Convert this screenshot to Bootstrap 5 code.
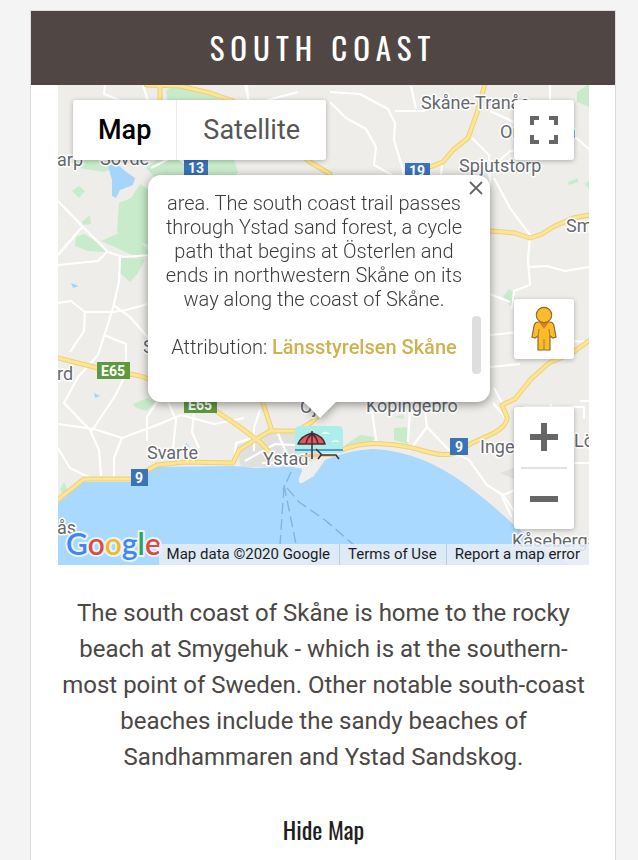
<!DOCTYPE html>
<html lang="en">
<head>
<meta charset="utf-8">
<meta name="viewport" content="width=device-width, initial-scale=1">
<title>South Coast</title>
<link href="https://cdn.jsdelivr.net/npm/bootstrap@5.3.0/dist/css/bootstrap.min.css" rel="stylesheet">
<style>
body { background: #f4f4f4; font-family: Roboto, "Liberation Sans", sans-serif; color: #4b4745; }
.page-shell { padding: 10px 22px 0 30px; }
.region-panel { border: 1px solid #dcdcdc; border-bottom: 0; min-height: calc(100vh - 10px); }
.region-head { background: #504644; height: 74px; }
.region-head h1 { font-family: Oswald, "Liberation Sans Narrow", "Liberation Sans", sans-serif; font-size: 31px; line-height: 72px; letter-spacing: 6px; }
.region-body { padding: 0 26px 0 27px; }
.map-frame { height: 480px; background: #eeede9; }
.map-canvas { width: 100%; height: 100%; }
.over { position: absolute; }
.map-tile { background: #fff; border: 0; border-radius: 3px; box-shadow: 0 1px 5px rgba(0,0,0,.28); }
.type-switch { left: 15px; top: 15px; height: 60px; }
.type-switch button { background: #fff; border: 0; font-size: 27px; padding: 0 26px; color: #565656; }
.type-switch button.current { color: #000; font-weight: 500; border-right: 1px solid #ebebeb; padding: 0 25px; }
.square { right: 15px; width: 60px; height: 60px; padding: 0; }
.full-btn { top: 15px; }
.pegman-btn { top: 214px; }
.zoom-box { right: 15px; top: 322px; width: 60px; }
.zoom-box button { height: 60px; background: none; border: 0; padding: 0; }
.zoom-box hr { margin: 0 7px; border-top: 2px solid #e2e2e2; opacity: 1; }
.info-bubble { left: 90px; top: 90px; width: 342px; height: 227px; border-radius: 13px; background: #fff; filter: drop-shadow(0 2px 5px rgba(0,0,0,.42)); }
.info-bubble::after { content: ""; position: absolute; left: 156px; top: 100%; border: 16px solid transparent; border-top-color: #fff; border-bottom: 0; }
.info-text { padding: 16px 24px 0 14px; font-weight: 300; font-size: 20px; line-height: 24px; color: #3c3c3c; }
.info-text a { color: #d0b150; font-weight: 500; }
.close-btn { right: 7px; top: 6px; background: none; border: 0; padding: 0; width: 14px; height: 14px; line-height: 0; }
.scroll-thumb { right: 9px; top: 141px; width: 9px; height: 58px; border-radius: 4px; background: #dedede; }
.map-credits { right: 0; bottom: 0; height: 21px; background: rgba(230,238,246,.86); font-size: 15px; line-height: 21px; }
.map-credits > * { padding: 0 9px 0 8px; color: #1c1c1c; white-space: nowrap; }
.map-credits > * + * { border-left: 1px solid #b4cfe4; }
.place { font-size: 18px; fill: #65696e; stroke: #fff; stroke-width: 3px; paint-order: stroke; stroke-linejoin: round; }
.shield { font-size: 14px; font-weight: 700; fill: #fff; text-anchor: middle; }
.brand { font-family: Lato, sans-serif; font-size: 30px; font-weight: 600; stroke: #e9f4fc; stroke-width: 4px; paint-order: stroke; stroke-linejoin: round; }
.intro { font-size: 24px; line-height: 36px; margin: 30px 0 36px; }
.hide-btn { font-family: Oswald, "Liberation Sans Narrow", "Liberation Sans", sans-serif; font-size: 24px; line-height: 36px; color: #1f1f1f; background: none; border: 0; padding: 0; }
</style>
</head>
<body>
<div class="page-shell">
<main class="region-panel bg-white">
  <header class="region-head text-center text-white"><h1 class="m-0 fw-normal">SOUTH COAST</h1></header>
  <div class="region-body text-center">
    <section class="map-frame position-relative overflow-hidden" aria-label="Map of the south coast">
      <svg class="map-canvas d-block" viewBox="58 85 531 480" preserveAspectRatio="xMidYMid slice">
        <rect x="-400" y="85" width="1400" height="480" fill="#eeede9"/>
        <g fill="#c8eccb">
          <path d="M166 91l8-6h14l22 9 20 12h-62z"/><path d="M146 168l12-9h76l4 14-10 8h-70z"/>
          <path d="M70 161l16-2 22 2 4 8-8 3-26-4z"/>
          <path d="M119 203l12-5 9-14 12 8v53l-20-3-15-10z"/>
          <path d="M76 237l8-3 12 7 10 11-18-1-13-5z"/>
          <path d="M101 241l20-9 18 9 12 12-10 6-22-10z"/><path d="M120 257l25 2-7 14-8 9-10-9z"/>
          <path d="M72 191l7-5 6 5-6 7zM82 222l8-7 1 9-8 1z"/>
          <path d="M133 404l14-6 8 4-8 9-11-3z"/><path d="M577 92l12-8v23l-12-5z"/><path d="M568 182l10-4v4l-9 3zM585 184l4-3v8z"/>
          <path d="M503 297l6-8 6 4v9l-5 4z"/><path d="M345 445l15-10 15 2-3 6-27 5zM394 428l13-1 1 17-14-4zM393 417l10-2 1 4zM64 482l4 9-5 4-3-6z"/>
          <path d="M563 125l12 3-3 6-9-2z"/>
        </g>
        <g fill="#a6d5fa"><path d="M108 166l8-3 9 8 10 7-2 7-13 5-4 8-4-2v-16z"/><path d="M71 283l8 3-6 2zM94 393l6 3-5 2zM186 443l4 4-5-1z"/></g>
        <path fill="#e0e1df" d="M236 447l35-18 30 3 20 25-25 10h-55zM500 473l18-7 12 7-14 7z"/>
        <!-- minor roads -->
        <g fill="none" stroke="#fff" stroke-width="2.2" stroke-linejoin="round">
          <path d="M58 201l24 25 26 26 15 5 28-2M58 265l40-4 9-9M58 255l24-28M120 257l-1 25-6 26-15 47-20 22-14 26 26 27 9 20 2 26M58 303l13-2 14 11 28 0 13-2 22-6M113 305l17 12 21 24M85 311l-1 20-14 21M104 335l22 9 0 30-11 22-24 36M58 424l36 5 28 9 35-13 24-10 33 9 30-6M122 438l-8 20v22M58 448l12 20 20 10M157 402l-10 15v24M168 402l8 18-3 28M195 402l-3 30 7 16"/>
          <path d="M105 85l-1 9 15 6M143 85l5 16M245 85l4 16M262 102l6-2 30-8M247 85l1 15M550 85v17M151 168l23-12 22 14M330 92l30 2 28 15 7 14-1 17 9 30v6M330 102l16 16 20 11 10 18-2 18 18 10M411 86l5 23M395 111h30M490 111l30 14M472 138l17 17 1 30M442 162l-1 15M500 160l10-9 30-4M573 135l16 14M494 178l16 30 20 27-2 25 2 25-16 6-2 18M530 267l17-1 18 5 24-4M490 294l20 8M490 335l30-3M520 364l-30 3M570 341l19 1M494 388l11 20M508 421l-15-18M580 401h9M560 463h29"/>
          <path d="M234 465l2-22 30-9M245 461l30-17 40 2M277 431l11 26M372 411l5 35M410 408l-2 34M425 410l2 17-18 24M427 427l22 23 20 10 18 25 16 10 15 22M501 496l14-6M502 497l10 20M260 410l-6 18 0 23M524 407h60v12M553 409l-3-5"/>
          <path d="M262 463h46v6l-18-3"/>
        </g>
        <!-- sea -->
        <path fill="#a9d9fe" d="M58 503l25-21h50l24-15 76-1 23 2 28-1 18-2 0 12q-3 7 4 2l11-7 8-12q24-10 48-11 25 1 50 11 22 9 45 26 26 20 46 39l30 24 30 18H-300z"/>
        <path d="M288 466l15 3-4 9q-1 8 5 4l10-6 7-16z" fill="#eff0ed"/>
        <g fill="none" stroke="#80b5df" stroke-width="1.4"><path d="M291 472l-8 18M284 487l-4 58M284 485l12 59M287 488l12 14 26 18 30 26" stroke-dasharray="11 5"/></g>
        <!-- main roads: casing, then fill -->
        <g fill="none" stroke-linejoin="round" stroke-linecap="round">
          <g stroke="#efcf77" stroke-width="5">
            <path id="coastRoad" d="M50 506l34-27h48l25-14 28-3 48 1 6-13 14-9 17-10h27l15-9 25-25M342 450q20-8 42-6 20 1 40 7 17 5 27 3 10-2 19-10l24-11q14-8 13-16l-5-12 13-6 16-20 18-16 23-10 25-18"/>
            <path id="inlandRoad" d="M50 356l48 12 42 8 24 8 36 17 16 10 21 14 23 17 14 15M262 400l10 31M146 85l34 1 30 7 23 8 77 61 20 12M160 86v16M486 80l-9 33-9 25-15 12-10 12-13 5M490 231l25 2 15 5 12-4 11-7 20-9 22-4"/>
          </g>
          <g stroke="#fce693" stroke-width="3">
            <use href="#coastRoad"/><use href="#inlandRoad"/>
          </g>
        </g>
        <g>
          <text class="place" x="57" y="166">arp</text><text class="place" x="100" y="165">Sövde</text>
          <text class="place" x="421" y="109">Skåne-Tranås</text><text class="place" x="500" y="138">Onslunda</text>
          <text class="place" x="459" y="172">Spjutstorp</text><text class="place" x="566" y="232">Sm</text>
          <text class="place" x="143" y="353">Sjörup</text><text class="place" x="57" y="380">rd</text>
          <text class="place" x="300" y="413">Oja</text><text class="place" x="366" y="412">Köpingebro</text>
          <text class="place" x="147" y="459">Svarte</text><text class="place" x="263" y="465">Ystad</text>
          <text class="place" x="480" y="453">Ingelstorp</text><text class="place" x="574" y="447">Lö</text>
          <text class="place" x="57" y="534">ås</text><text class="place" x="512" y="547">Kåseberga</text>
        </g>
        <g>
          <path fill="#3b73b9" d="M184 160h24v17h-24zM405 163h25v17h-25zM131 469h17v17h-17zM450 438h18v17h-18z"/>
          <path fill="#5d9a3f" d="M97 362h33v17H97zM184 397h33v16h-33z"/>
          <text class="shield" x="196" y="173">13</text><text class="shield" x="417" y="176">19</text>
          <text class="shield" x="139" y="483">9</text><text class="shield" x="459" y="452">9</text>
          <text class="shield" x="113" y="376">E65</text><text class="shield" x="200" y="410">E65</text>
        </g>
        <!-- beach marker -->
        <g>
          <path d="M295 453v-22q0-5 5-5h38q5 0 5 5v22z" fill="#aeeeea"/>
          <path d="M295 449h48v2h-48z" fill="#4e9ed0"/>
          <path d="M297 457q13-5 25-3l17 3z" fill="#f7c58f"/>
          <path d="M321 434q4-5 9 0zM331 442q4-4 9 0z" fill="#e9fffd"/>
          <path d="M298 444q3-8 14-11 11 3 13 11z" fill="#ee5157" stroke="#39323c" stroke-width="1.6" stroke-linejoin="round"/>
          <path d="M306 444q1-7 6-10 5 3 6 10M312 431v28M316 449l6 6h14l3 4M321 455l-3 4" fill="none" stroke="#39323c" stroke-width="1.5"/>
        </g>
        <text class="brand" x="66" y="555"><tspan fill="#4285f4">G</tspan><tspan fill="#dd4b3e">o</tspan><tspan fill="#f2b926">o</tspan><tspan fill="#4285f4">g</tspan><tspan fill="#34a15a">l</tspan><tspan fill="#dd4b3e">e</tspan></text>
      </svg>

      <div class="over map-tile type-switch d-flex overflow-hidden" role="group" aria-label="Map type">
        <button type="button" class="current">Map</button><button type="button">Satellite</button>
      </div>
      <button type="button" class="over map-tile square full-btn" aria-label="Full screen">
        <svg class="d-block mx-auto" width="28" height="28" viewBox="0 0 28 28" fill="none" stroke="#666" stroke-width="4"><path d="M2 9V2h7M19 2h7v7M26 19v7h-7M9 26H2v-7"/></svg>
      </button>
      <button type="button" class="over map-tile square pegman-btn" aria-label="Street View">
        <svg class="d-block mx-auto" width="28" height="46" viewBox="0 0 28 46"><path d="M8 16h12q3 0 4 4l2 11-3 1-3-2v14H8V30l-3 2-3-1 2-11q1-4 4-4z" fill="#fbbc2c" stroke="#8c6b2a" stroke-width="1.2"/><path d="M9 16h10l-5 7z" fill="#e0781e"/><circle cx="14" cy="9" r="7.7" fill="#fbbc2c" stroke="#8c6b2a" stroke-width="1.2"/><path d="M14 33v11M8 31l1-8M20 31l-1-8" stroke="#b88626" stroke-width="1.2"/></svg>
      </button>
      <div class="over map-tile zoom-box d-flex flex-column">
        <button type="button" aria-label="Zoom in"><svg class="d-block mx-auto" width="28" height="28" viewBox="0 0 28 28"><path d="M11 0h6v11h11v6H17v11h-6V17H0v-6h11z" fill="#666"/></svg></button>
        <hr>
        <button type="button" aria-label="Zoom out"><svg class="d-block mx-auto" width="28" height="6" viewBox="0 0 28 6"><path d="M0 0h28v6H0z" fill="#666"/></svg></button>
      </div>

      <div class="over info-bubble" role="dialog" aria-label="South coast trail">
        <p class="info-text m-0">area. The south coast trail passes through Ystad sand forest, a cycle path that begins at Österlen and ends in northwestern Skåne on its way along the coast of Skåne.<br><br>Attribution: <a href="#" class="text-decoration-none">Länsstyrelsen Skåne</a></p>
        <button type="button" class="over close-btn" aria-label="Close"><svg width="14" height="14" viewBox="0 0 14 14" stroke="#666" stroke-width="1.8"><path d="M1 1l12 12M13 1L1 13"/></svg></button>
        <span class="over scroll-thumb"></span>
      </div>
      <div class="over map-credits d-flex">
        <span>Map data ©2020 Google</span><a href="#" class="text-decoration-none">Terms of Use</a><a href="#" class="text-decoration-none">Report a map error</a>
      </div>
    </section>
    <p class="intro">The south coast of Skåne is home to the rocky beach at Smygehuk - which is at the southern-most point of Sweden. Other notable south-coast beaches include the sandy beaches of Sandhammaren and Ystad Sandskog.</p>
    <button type="button" class="hide-btn">Hide Map</button>
  </div>
</main>
</div>
<script src="https://cdn.jsdelivr.net/npm/bootstrap@5.3.0/dist/js/bootstrap.bundle.min.js"></script>
</body>
</html>
